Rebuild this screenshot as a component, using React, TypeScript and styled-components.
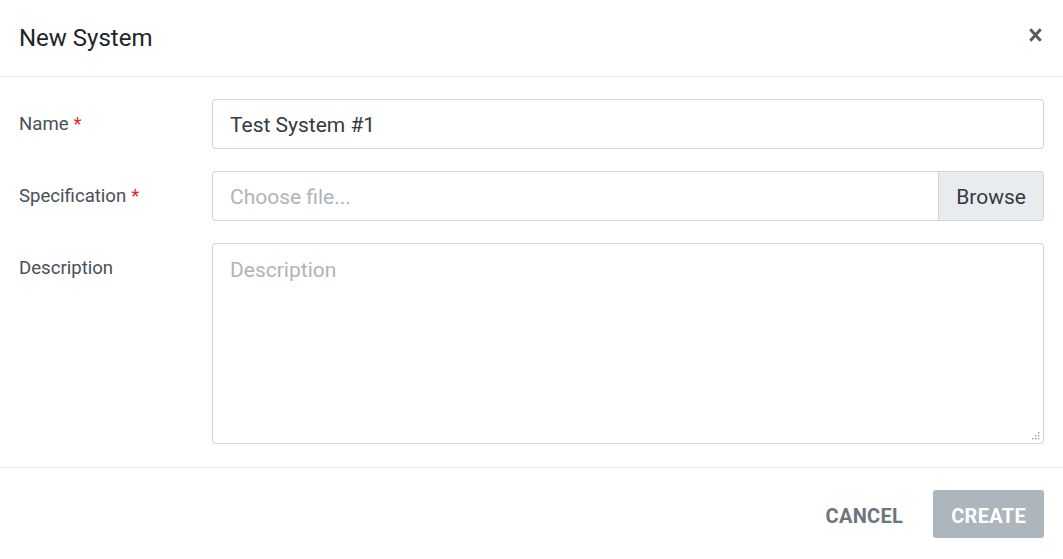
import React from "react";
import styled, { createGlobalStyle } from "styled-components";

const Global = createGlobalStyle`
  html, body { margin: 0; padding: 0; background: #ffffff; }
  body { font-family: Roboto, "Liberation Sans", Arial, sans-serif; }
  * { box-sizing: border-box; }
`;

const Modal = styled.div`
  width: 1063px;
  height: 559px;
  background: #fff;
  display: flex;
  flex-direction: column;
`;

const Header = styled.header`
  height: 77px;
  flex: none;
  display: flex;
  align-items: center;
  justify-content: space-between;
  padding: 0 19px 1px 19px;
  border-bottom: 1px solid #e9ecef;
`;

const Title = styled.h1`
  margin: 0;
  font-size: 24px;
  font-weight: 400;
  color: #212529;
`;

const CloseButton = styled.button`
  border: 0;
  background: transparent;
  padding: 0;
  width: 16px;
  height: 18px;
  margin-right: 1px;
  margin-bottom: 5px;
  display: flex;
  align-items: center;
  justify-content: center;
  cursor: pointer;
  color: #555b61;
`;

const Body = styled.div`
  display: grid;
  grid-template-columns: 193px 1fr;
  row-gap: 22px;
  padding: 22px 19px 23px 19px;
  border-bottom: 1px solid #e9ecef;
`;

const Label = styled.label`
  font-size: 18.6px;
  line-height: 50px;
  color: #495057;
  white-space: nowrap;
`;

const Required = styled.span`
  color: #e3262b;
  margin-left: 5px;
`;

const fieldBase = `
  width: 100%;
  border: 1px solid #ced4da;
  border-radius: 3px;
  font-family: Roboto, "Liberation Sans", Arial, sans-serif;
  font-size: 21px;
  color: #343a40;
  background: #fff;
  outline: none;
  &::placeholder { color: #aeb4ba; }
`;

const TextInput = styled.input`
  ${fieldBase}
  height: 50px;
  padding: 2px 17px 0 17px;
`;

const FileGroup = styled.div`
  display: flex;
  height: 50px;
  border: 1px solid #ced4da;
  border-radius: 3px;
  overflow: hidden;
`;

const FileText = styled.div<{ $placeholder?: boolean }>`
  flex: 1;
  display: flex;
  align-items: center;
  padding: 2px 17px 0 17px;
  font-size: 21px;
  color: ${(p) => (p.$placeholder ? "#aeb4ba" : "#343a40")};
`;

const BrowseButton = styled.div`
  flex: none;
  display: flex;
  align-items: center;
  padding: 2px 17px 0 17px;
  border-left: 1px solid #ced4da;
  background: #e9ecef;
  font-size: 21px;
  color: #343a40;
`;

const AreaWrap = styled.div`
  position: relative;
  height: 201px;
`;

const TextArea = styled.textarea`
  ${fieldBase}
  display: block;
  height: 201px;
  padding: 11px 17px;
  line-height: 30px;
  resize: none;
`;

const Grip = styled.svg`
  position: absolute;
  right: 4px;
  bottom: 4px;
  pointer-events: none;
`;

const Footer = styled.footer`
  flex: 1;
  display: flex;
  justify-content: flex-end;
  align-items: flex-start;
  gap: 14px;
  padding: 22px 19px 0 19px;
`;

const Button = styled.button<{ $variant: "text" | "primary" }>`
  height: 48px;
  padding: 3px ${(p) => (p.$variant === "primary" ? "18px" : "16px")} 0;
  border: 0;
  border-radius: 3px;
  font-family: Roboto, "Liberation Sans", Arial, sans-serif;
  font-size: 20px;
  font-weight: 700;
  letter-spacing: 0.3px;
  text-transform: uppercase;
  cursor: pointer;
  background: ${(p) => (p.$variant === "primary" ? "#adb5bd" : "transparent")};
  color: ${(p) => (p.$variant === "primary" ? "#ffffff" : "#6c757d")};
`;

export default function App() {
  return (
    <>
      <Global />
      <Modal>
        <Header>
          <Title>New System</Title>
          <CloseButton aria-label="Close">
            <svg width="13" height="14" viewBox="0 0 13 14">
              <path
                d="M1.3 1.3 L11.7 12.7 M11.7 1.3 L1.3 12.7"
                stroke="currentColor"
                strokeWidth="2.9"
                strokeLinecap="butt"
              />
            </svg>
          </CloseButton>
        </Header>
        <Body>
          <Label>
            Name<Required>*</Required>
          </Label>
          <TextInput defaultValue="Test System #1" />
          <Label>
            Specification<Required>*</Required>
          </Label>
          <FileGroup>
            <FileText $placeholder>Choose file...</FileText>
            <BrowseButton>Browse</BrowseButton>
          </FileGroup>
          <Label>Description</Label>
          <AreaWrap>
            <TextArea placeholder="Description" />
            <Grip width="9" height="9" viewBox="0 0 9 9">
              <g fill="#9aa0a6">
                <rect x="7" y="1" width="1.4" height="1.4" />
                <rect x="4" y="4" width="1.4" height="1.4" />
                <rect x="7" y="4" width="1.4" height="1.4" />
                <rect x="1" y="7" width="1.4" height="1.4" />
                <rect x="4" y="7" width="1.4" height="1.4" />
                <rect x="7" y="7" width="1.4" height="1.4" />
              </g>
            </Grip>
          </AreaWrap>
        </Body>
        <Footer>
          <Button $variant="text">Cancel</Button>
          <Button $variant="primary">Create</Button>
        </Footer>
      </Modal>
    </>
  );
}
